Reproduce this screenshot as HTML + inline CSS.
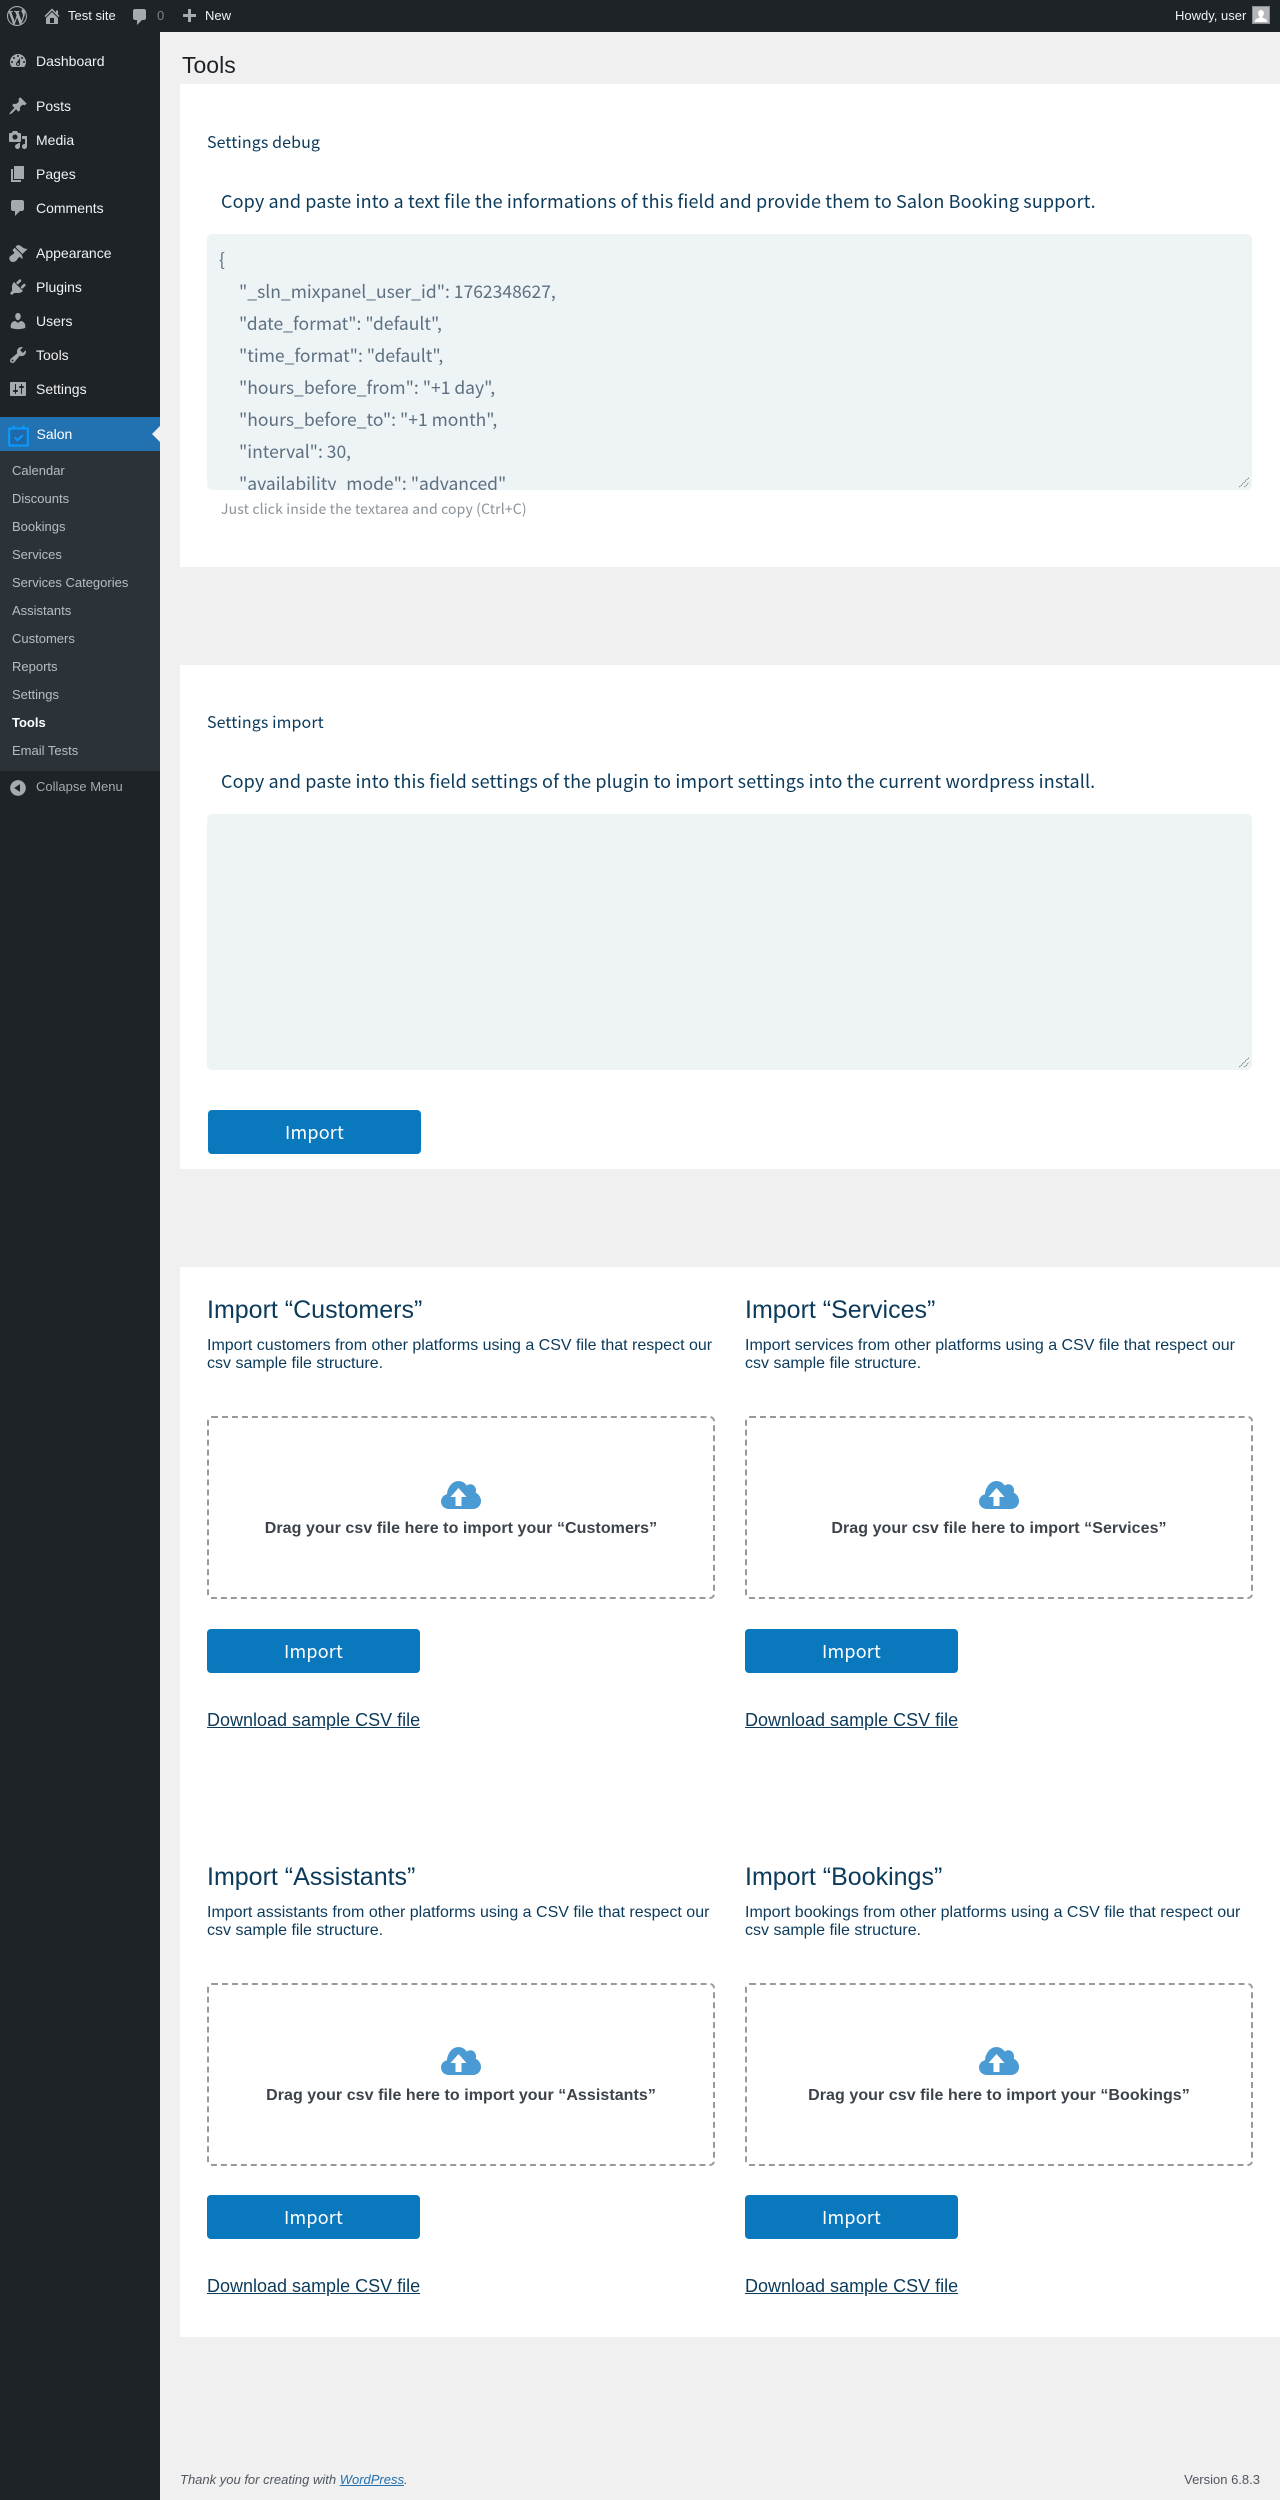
<!DOCTYPE html>
<html lang="en"><head><meta charset="utf-8"><title>Tools</title>
<style>
*{box-sizing:border-box}
html,body{margin:0;padding:0}
body{width:1280px;height:2500px;position:relative;overflow:hidden;background:#f0f0f1;font-family:"Liberation Sans",sans-serif;font-size:13px;color:#3c434a}
.a{position:absolute;white-space:nowrap}
#bar{position:absolute;left:0;top:0;width:1280px;height:32px;background:#1d2327}
#side{position:absolute;left:0;top:32px;width:160px;height:2468px;background:#1d2327}
#sub{position:absolute;left:0;top:451px;width:160px;height:320px;background:#2c3338}
#cur{position:absolute;left:0;top:417px;width:160px;height:34px;background:#2271b1}
.bt{font-size:13px;line-height:32px;top:0;color:#f0f0f1}
.m{font-size:14px;line-height:20px;left:36px;color:#f0f0f1}
.s{font-size:13px;line-height:20px;left:12px;color:rgba(240,246,252,.7)}
svg.i{position:absolute;width:20px;height:20px;left:8px;fill:#a7aaad}
svg.t{position:absolute;fill:#a7aaad}
.p{position:absolute;left:180px;width:1100px;background:#fff}
.o{font-family:"Noto Sans CJK JP","Liberation Sans",sans-serif}
.h3{font-size:16px;letter-spacing:.1px;line-height:24px;color:#0b3a5b;left:207px}
.cp{font-size:18px;letter-spacing:.12px;line-height:28px;color:#0b3a5b;left:221px}
.ta{position:absolute;left:207px;width:1045px;height:256px;background:#eef3f6;border-radius:5px;overflow:hidden}
.ln{position:absolute;white-space:pre;font-size:17.5px;line-height:32px;color:#5c7080}
.grip{position:absolute;right:2px;bottom:2px;width:12px;height:12px}
.btn{position:absolute;height:44px;width:213px;background:#0a78bd;border-radius:4px;color:#fff;text-align:center;font-size:18px;line-height:44px;letter-spacing:.2px}
.tt{font-size:25px;line-height:30px;color:#0b3a5b}
.d{font-size:16px;line-height:18px;color:#0b3a5b;white-space:normal;width:508px}
.dz{position:absolute;width:508px;height:183px;border:2px dashed #999;border-radius:5px}
.dr{font-size:16px;font-weight:700;line-height:20px;letter-spacing:.06px;color:#3c434a;text-align:center;width:508px}
.cl{position:absolute;width:40px;height:28px}
.l{font-size:18px;line-height:22px;color:#0b3a5b;text-decoration:underline}
</style></head><body>

<div id="bar"></div>
<svg class="t" style="left:7px;top:6px;width:20px;height:20px" viewBox="0 0 20 20"><path d="M20 10c0-5.51-4.49-10-10-10C4.48 0 0 4.49 0 10c0 5.52 4.48 10 10 10 5.51 0 10-4.48 10-10zM7.78 15.37L4.37 6.22c.55-.02 1.17-.08 1.17-.08.5-.06.44-1.13-.06-1.11 0 0-1.45.11-2.37.11-.18 0-.37 0-.58-.01C4.12 2.69 6.87 1.11 10 1.11c2.33 0 4.45.87 6.05 2.34-.68-.11-1.65.39-1.65 1.58 0 .74.45 1.36.9 2.1.35.61.55 1.36.55 2.46 0 1.49-1.4 5-1.4 5l-3.03-8.37c.54-.02.82-.17.82-.17.5-.05.44-1.25-.06-1.22 0 0-1.44.12-2.38.12-.87 0-2.33-.12-2.33-.12-.5-.03-.56 1.2-.06 1.22l.92.08 1.26 3.41zM17.41 10c.24-.64.74-1.87.43-4.25.7 1.29 1.05 2.71 1.05 4.25 0 3.29-1.73 6.24-4.4 7.78.97-2.59 1.94-5.2 2.92-7.78zM6.1 18.09C3.12 16.65 1.11 13.53 1.11 10c0-1.3.23-2.48.72-3.59C3.25 10.3 4.67 14.2 6.1 18.09zm4.03-6.63l2.58 6.98c-.86.29-1.76.45-2.71.45-.79 0-1.57-.11-2.29-.33.81-2.38 1.62-4.74 2.42-7.1z"/></svg>
<svg class="t" style="left:42px;top:6px;width:20px;height:20px" viewBox="0 0 20 20"><path d="M16 8.5l1.53 1.53-1.06 1.06L10 4.62l-6.47 6.47-1.06-1.06L10 2.5l4 4v-2h2v4zm-6-2.46l6 5.99V18H4v-5.97zM12 17v-5H8v5h4z"/></svg>
<div class="a bt" style="left:68px">Test site</div>
<svg class="t" style="left:130px;top:7px;width:20px;height:20px" viewBox="0 0 20 20"><path d="M5 2h9c1.1 0 2 .9 2 2v7c0 1.1-.9 2-2 2h-2l-5 5v-5H5c-1.1 0-2-.9-2-2V4c0-1.1.9-2 2-2z"/></svg>
<div class="a bt" style="left:157px;color:#7e8388">0</div>
<svg class="t" style="left:179px;top:7px;width:20px;height:20px" viewBox="0 0 20 20"><path d="M17 7v3h-5v5H9v-5H4V7h5V2h3v5h5z"/></svg>
<div class="a bt" style="left:205px">New</div>
<div class="a bt" style="left:1175px">Howdy, user</div>
<div class="a" style="left:1252px;top:6px;width:18px;height:18px;background:#b4b6b9;border:1px solid #8c8f94;overflow:hidden">
<svg style="position:absolute;left:-1px;top:-1px;width:18px;height:18px" viewBox="0 0 18 18"><path fill="#fff" d="M9 4c1.9 0 2.9 1.5 2.9 3.3 0 1.500-.7 2.700-1.500 3.400v.8l3.600 1.700c.8.4 1 1.300 1 2.800H3c0-1.500.2-2.400 1-2.800l3.600-1.700v-.8C6.800 10 6.100 8.800 6.100 7.300 6.100 5.500 7.100 4 9 4z"/></svg></div>

<div id="side"></div>
<div id="sub"></div>
<div id="cur"></div>
<svg class="i" style="top:51px" viewBox="0 0 20 20"><path d="M3.76 16h12.48c1.100-1.370 1.760-3.110 1.760-5 0-4.420-3.580-8-8-8s-8 3.580-8 8c0 1.890.66 3.630 1.760 5zM10 4c.55 0 1 .45 1 1s-.45 1-1 1-1-.45-1-1 .45-1 1-1zM6 6c.55 0 1 .45 1 1s-.45 1-1 1-1-.45-1-1 .45-1 1-1zm8 0c.55 0 1 .45 1 1s-.45 1-1 1-1-.45-1-1 .45-1 1-1zm-5.370 5.550L12 7v6c0 1.100-.9 2-2 2s-2-.9-2-2c0-.57.24-1.080.63-1.450zM4 10c.55 0 1 .45 1 1s-.45 1-1 1-1-.45-1-1 .45-1 1-1zm12 0c.55 0 1 .45 1 1s-.45 1-1 1-1-.45-1-1 .45-1 1-1zm-5 3c0-.55-.45-1-1-1s-1 .45-1 1 .45 1 1 1 1-.45 1-1z"/></svg>
<div class="a m" style="top:51px">Dashboard</div>
<svg class="i" style="top:96px" viewBox="0 0 20 20"><path d="M10.440 3.020l1.820-1.820 6.360 6.350-1.830 1.820c-1.050-.68-2.480-.57-3.410.36l-.75.75c-.92.93-1.040 2.350-.35 3.410l-1.830 1.820-2.410-2.410-2.800 2.790c-.42.42-3.380 2.710-3.800 2.290s1.860-3.390 2.280-3.810l2.790-2.790L4.100 9.360l1.830-1.820c1.050.69 2.480.57 3.400-.36l.75-.75c.93-.92 1.050-2.350.36-3.410z"/></svg>
<div class="a m" style="top:96px">Posts</div>
<svg class="i" style="top:130px" viewBox="0 0 20 20"><path d="M13 11V4c0-.55-.45-1-1-1h-1.670L9 1H5L3.670 3H2c-.55 0-1 .45-1 1v7c0 .55.45 1 1 1h10c.55 0 1-.45 1-1zM7 4.500c1.380 0 2.500 1.120 2.500 2.500S8.380 9.500 7 9.500 4.500 8.380 4.500 7 5.620 4.500 7 4.500zM14 6h5v10.500c0 1.380-1.120 2.500-2.500 2.500S14 17.880 14 16.500s1.120-2.500 2.500-2.500c.17 0 .34.02.5.05V9h-3V6zm-4 8.050V13h2v3.500c0 1.380-1.120 2.500-2.500 2.500S7 17.880 7 16.500 8.120 14 9.500 14c.17 0 .34.02.5.05z"/></svg>
<div class="a m" style="top:130px">Media</div>
<svg class="i" style="top:164px" viewBox="0 0 20 20"><path d="M6 15V2h10v13H6zm-1 1h8v2H3V5h2v11z"/></svg>
<div class="a m" style="top:164px">Pages</div>
<svg class="i" style="top:198px" viewBox="0 0 20 20"><path d="M5 2h9c1.100 0 2 .9 2 2v7c0 1.100-.9 2-2 2h-2l-5 5v-5H5c-1.100 0-2-.9-2-2V4c0-1.100.9-2 2-2z"/></svg>
<div class="a m" style="top:198px">Comments</div>
<svg class="i" style="top:243px" viewBox="0 0 20 20"><path d="M14.480 11.060L7.410 3.990l1.500-1.500c.5-.56 2.300-.47 3.510.32 1.210.8 1.430 1.280 2.910 2.100 1.180.64 2.450 1.260 4.450.85zm-.71.71L6.700 4.700 4.930 6.470c-.39.39-.39 1.020 0 1.410l1.060 1.060c.39.39.39 1.030 0 1.420-.6.6-1.430 1.110-2.210 1.690-.35.26-.7.53-1.010.84C1.430 13.230.78 15.370 1.820 17.200c.28.5.73.95 1.240 1.240 1.830 1.040 3.970.39 5.310-.95.31-.31.58-.66.84-1.010.58-.78 1.090-1.610 1.690-2.210.39-.39 1.030-.39 1.420 0l1.060 1.060c.39.39 1.020.39 1.410 0z"/></svg>
<div class="a m" style="top:243px">Appearance</div>
<svg class="i" style="top:277px" viewBox="0 0 20 20"><path d="M13.110 4.360L9.870 7.600 8 5.730l3.240-3.240c.35-.34 1.050-.2 1.560.32.52.51.66 1.210.31 1.550zm-8 1.770l.91-1.120 9.010 9.010-1.190.84c-.71.71-2.630 1.160-3.820 1.160H6.140L4.900 17.260c-.59.59-1.540.59-2.120 0-.59-.58-.59-1.530 0-2.120l1.240-1.240v-3.880c0-1.130.4-3.190 1.090-3.890zm7.260 3.970l3.240-3.240c.34-.35 1.040-.21 1.550.31.52.51.66 1.210.31 1.550l-3.240 3.250z"/></svg>
<div class="a m" style="top:277px">Plugins</div>
<svg class="i" style="top:311px" viewBox="0 0 20 20"><path d="M10 9.250c-2.270 0-2.730-3.440-2.730-3.440C7 4.020 7.820 2 9.970 2c2.160 0 2.980 2.020 2.710 3.810 0 0-.41 3.440-2.680 3.440zm0 2.570L12.720 10c2.390 0 4.520 2.330 4.520 4.530v2.490s-3.650 1.130-7.240 1.130c-3.650 0-7.240-1.130-7.240-1.130v-2.490c0-2.250 1.940-4.480 4.470-4.480z"/></svg>
<div class="a m" style="top:311px">Users</div>
<svg class="i" style="top:345px" viewBox="0 0 20 20"><path d="M16.680 9.770c-1.340 1.340-3.300 1.670-4.950.99l-5.410 6.520c-.99.99-2.590.99-3.580 0s-.99-2.590 0-3.570l6.520-5.420c-.68-1.650-.35-3.610.99-4.950 1.280-1.280 3.120-1.620 4.720-1.060l-2.890 2.890 2.820 2.820 2.860-2.870c.53 1.580.18 3.390-1.080 4.650zM3.810 16.210c.4.39 1.040.39 1.430 0 .4-.4.4-1.040 0-1.430-.39-.4-1.030-.4-1.430 0-.39.39-.39 1.030 0 1.430z"/></svg>
<div class="a m" style="top:345px">Tools</div>
<svg class="i" style="top:379px" viewBox="0 0 20 20"><path fill-rule="evenodd" d="M18 16V4c0-.55-.45-1-1-1H3c-.55 0-1 .45-1 1v12c0 .55.45 1 1 1h14c.55 0 1-.45 1-1zM8 11h1c.55 0 1 .45 1 1s-.45 1-1 1H8v1.500c0 .28-.22.5-.5.5s-.5-.22-.5-.5V13H6c-.55 0-1-.45-1-1s.45-1 1-1h1V5.500c0-.28.22-.5.5-.5s.5.22.5.5V11zm5-2h-1c-.55 0-1-.45-1-1s.45-1 1-1h1V5.500c0-.28.22-.5.5-.5s.5.22.5.5V7h1c.55 0 1 .45 1 1s-.45 1-1 1h-1v5.500c0 .28-.22.5-.5.5s-.5-.22-.5-.5V9z"/></svg>
<div class="a m" style="top:379px">Settings</div>

<svg class="a" style="left:8px;top:425px;width:21px;height:22px" viewBox="0 0 21 22"><rect x="1.200" y="3.500" width="18.600" height="17" fill="#1f69ab" stroke="#0a9bff" stroke-width="2"/><path d="M5.500 0.500v4M15.500 0.500v4" stroke="#0a9bff" stroke-width="2" fill="none"/><path d="M6.800 12.500l2.800 2.700 5-5" stroke="#0a9bff" stroke-width="2" fill="none"/></svg>
<div class="a m" style="top:424px;color:#fff;left:36.500px">Salon</div>
<div class="a" style="left:152px;top:426px;width:0;height:0;border:8px solid transparent;border-left:0;border-right-color:#f0f0f1"></div>

<div class="a s" style="top:461px">Calendar</div>
<div class="a s" style="top:489px">Discounts</div>
<div class="a s" style="top:517px">Bookings</div>
<div class="a s" style="top:545px">Services</div>
<div class="a s" style="top:573px">Services Categories</div>
<div class="a s" style="top:601px">Assistants</div>
<div class="a s" style="top:629px">Customers</div>
<div class="a s" style="top:657px">Reports</div>
<div class="a s" style="top:685px">Settings</div>
<div class="a s" style="top:713px;color:#fff;font-weight:700">Tools</div>
<div class="a s" style="top:741px">Email Tests</div>
<svg class="i" style="top:778px" viewBox="0 0 20 20"><path d="M10 2.160c4.330 0 7.840 3.510 7.840 7.840s-3.510 7.840-7.840 7.840S2.160 14.330 2.160 10 5.710 2.160 10 2.160zm2 11.720V6.120L6.180 9.970z"/></svg>
<div class="a" style="left:36px;top:777px;font-size:13px;line-height:20px;color:#a7aaad">Collapse Menu</div>

<div class="a" style="left:182px;top:50px;font-size:23px;line-height:30px;color:#1d2327">Tools</div>

<div class="p" style="top:84px;height:483px"></div>
<div class="p" style="top:665px;height:504px"></div>
<div class="p" style="top:1267px;height:1070px"></div>

<div class="a o h3" style="top:129px">Settings debug</div>
<div class="a o cp" style="top:187px">Copy and paste into a text file the informations of this field and provide them to Salon Booking support.</div>
<div class="ta o" style="top:234px">
<div class="ln" style="left:12px;top:10px">{</div>
<div class="ln" style="left:32px;top:42px">"_sln_mixpanel_user_id": 1762348627,</div>
<div class="ln" style="left:32px;top:74px">"date_format": "default",</div>
<div class="ln" style="left:32px;top:106px">"time_format": "default",</div>
<div class="ln" style="left:32px;top:138px">"hours_before_from": "+1 day",</div>
<div class="ln" style="left:32px;top:170px">"hours_before_to": "+1 month",</div>
<div class="ln" style="left:32px;top:202px">"interval": 30,</div>
<div class="ln" style="left:32px;top:234px">"availability_mode": "advanced"</div>
<svg class="grip" viewBox="0 0 12 12"><path d="M1.500 11L11 1.500M6.500 11L11 6.500" stroke="#555" fill="none" stroke-dasharray="1 1"/></svg>
</div>
<div class="a o" style="left:221px;top:499px;font-size:14px;letter-spacing:.15px;line-height:20px;color:#8a9299">Just click inside the textarea and copy (Ctrl+C)</div>

<div class="a o h3" style="top:709px">Settings import</div>
<div class="a o cp" style="top:767px">Copy and paste into this field settings of the plugin to import settings into the current wordpress install.</div>
<div class="ta" style="top:814px"><svg class="grip" viewBox="0 0 12 12"><path d="M1.500 11L11 1.500M6.500 11L11 6.500" stroke="#555" fill="none" stroke-dasharray="1 1"/></svg></div>
<div class="btn o" style="left:208px;top:1110px">Import</div>

<!-- Customers -->
<div class="a tt" style="left:207px;top:1295px">Import “Customers”</div>
<div class="a d" style="left:207px;top:1337px">Import customers from other platforms using a CSV file that respect our csv sample file structure.</div>
<div class="dz" style="left:207px;top:1416px"></div>
<svg class="cl" style="left:441px;top:1481px" viewBox="0 0 40 28"><path fill="#4a9bd4" d="M8 28C3.500 28 0 24.800 0 20.500 0 16.800 2.500 14 6 13.200 6.500 6 11.500 0 17.500 0c3.500 0 6.500 1.800 8.300 4.700C26.800 3.800 28 3.300 29.300 3.300c3 0 5.400 2.300 5.700 5.500 0 1 0 2-.3 2.900C37.800 13 40 16.200 40 20c0 4.500-3.500 8-8 8z"/><path fill="#fff" d="M17.500 7l-8 9h5v9h6v-9h5z"/></svg>
<div class="a dr" style="left:207px;top:1519px">Drag your csv file here to import your “Customers”</div>
<div class="btn o" style="left:207px;top:1629px">Import</div>
<div class="a l" style="left:207px;top:1709px">Download sample CSV file</div>

<!-- Services -->
<div class="a tt" style="left:745px;top:1295px">Import “Services”</div>
<div class="a d" style="left:745px;top:1337px">Import services from other platforms using a CSV file that respect our csv sample file structure.</div>
<div class="dz" style="left:745px;top:1416px"></div>
<svg class="cl" style="left:979px;top:1481px" viewBox="0 0 40 28"><path fill="#4a9bd4" d="M8 28C3.500 28 0 24.800 0 20.500 0 16.800 2.500 14 6 13.200 6.500 6 11.500 0 17.500 0c3.500 0 6.500 1.800 8.300 4.700C26.800 3.800 28 3.300 29.300 3.300c3 0 5.400 2.300 5.700 5.500 0 1 0 2-.3 2.900C37.800 13 40 16.200 40 20c0 4.500-3.500 8-8 8z"/><path fill="#fff" d="M17.500 7l-8 9h5v9h6v-9h5z"/></svg>
<div class="a dr" style="left:745px;top:1519px">Drag your csv file here to import “Services”</div>
<div class="btn o" style="left:745px;top:1629px">Import</div>
<div class="a l" style="left:745px;top:1709px">Download sample CSV file</div>

<!-- Assistants -->
<div class="a tt" style="left:207px;top:1862px">Import “Assistants”</div>
<div class="a d" style="left:207px;top:1904px">Import assistants from other platforms using a CSV file that respect our csv sample file structure.</div>
<div class="dz" style="left:207px;top:1983px"></div>
<svg class="cl" style="left:441px;top:2047px" viewBox="0 0 40 28"><path fill="#4a9bd4" d="M8 28C3.500 28 0 24.800 0 20.500 0 16.800 2.500 14 6 13.200 6.500 6 11.500 0 17.500 0c3.500 0 6.500 1.800 8.300 4.700C26.800 3.800 28 3.300 29.300 3.300c3 0 5.400 2.300 5.700 5.500 0 1 0 2-.3 2.900C37.800 13 40 16.200 40 20c0 4.500-3.500 8-8 8z"/><path fill="#fff" d="M17.500 7l-8 9h5v9h6v-9h5z"/></svg>
<div class="a dr" style="left:207px;top:2086px">Drag your csv file here to import your “Assistants”</div>
<div class="btn o" style="left:207px;top:2195px">Import</div>
<div class="a l" style="left:207px;top:2275px">Download sample CSV file</div>

<!-- Bookings -->
<div class="a tt" style="left:745px;top:1862px">Import “Bookings”</div>
<div class="a d" style="left:745px;top:1904px">Import bookings from other platforms using a CSV file that respect our csv sample file structure.</div>
<div class="dz" style="left:745px;top:1983px"></div>
<svg class="cl" style="left:979px;top:2047px" viewBox="0 0 40 28"><path fill="#4a9bd4" d="M8 28C3.500 28 0 24.800 0 20.500 0 16.800 2.500 14 6 13.200 6.500 6 11.500 0 17.500 0c3.500 0 6.500 1.800 8.300 4.700C26.800 3.800 28 3.300 29.300 3.300c3 0 5.400 2.300 5.700 5.500 0 1 0 2-.3 2.900C37.800 13 40 16.200 40 20c0 4.500-3.500 8-8 8z"/><path fill="#fff" d="M17.500 7l-8 9h5v9h6v-9h5z"/></svg>
<div class="a dr" style="left:745px;top:2086px">Drag your csv file here to import your “Bookings”</div>
<div class="btn o" style="left:745px;top:2195px">Import</div>
<div class="a l" style="left:745px;top:2275px">Download sample CSV file</div>

<div class="a" style="left:180px;top:2470px;font-size:13px;line-height:20px;font-style:italic;color:#50575e">Thank you for creating with <span style="color:#2271b1;text-decoration:underline">WordPress</span>.</div>
<div class="a" style="right:20px;top:2470px;font-size:13px;line-height:20px;color:#50575e">Version 6.8.3</div>
</body></html>
